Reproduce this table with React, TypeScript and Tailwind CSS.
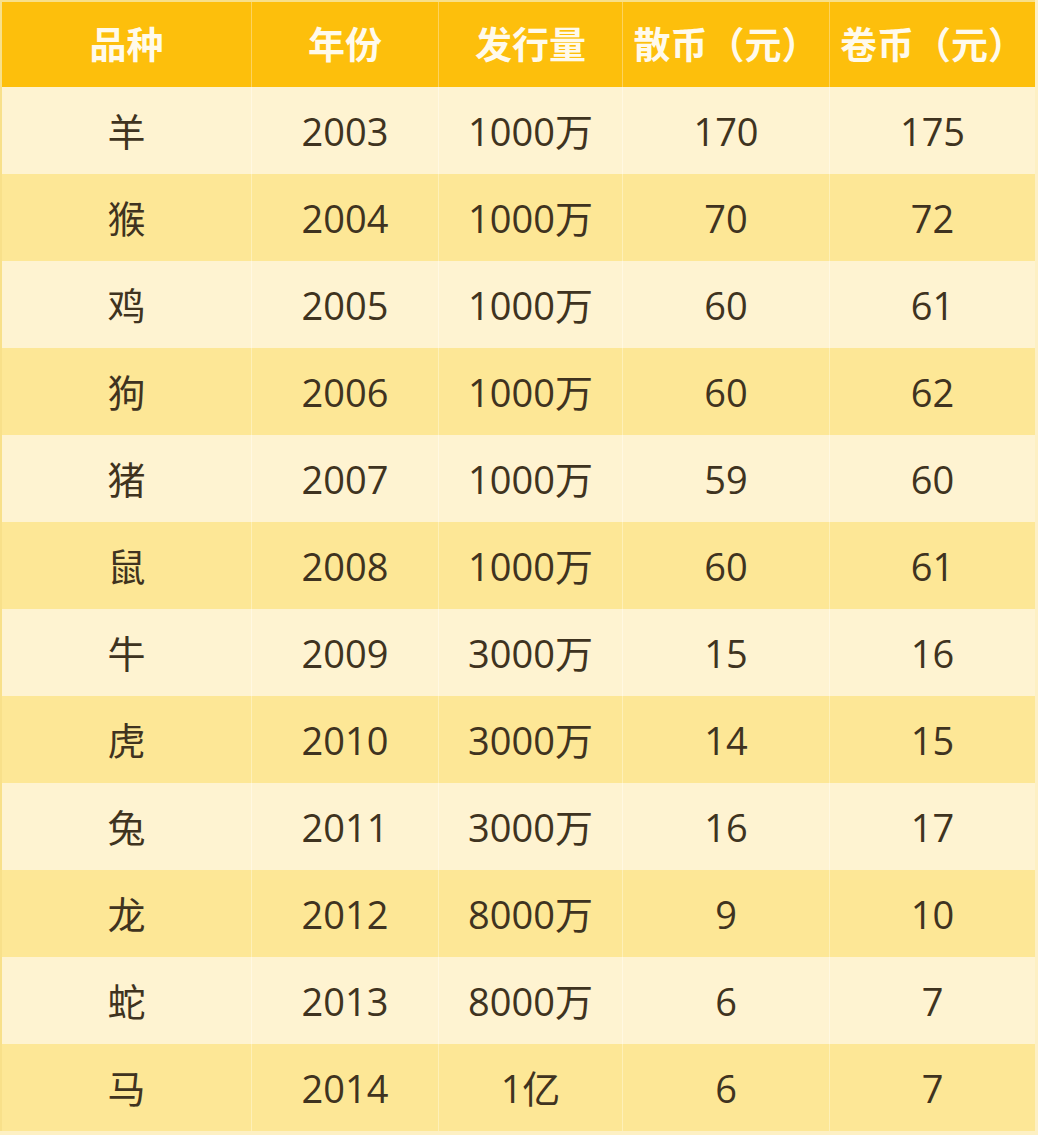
import React from "react";

const rows: [string, string, string, string, string][] = [
  ["羊", "2003", "1000万", "170", "175"],
  ["猴", "2004", "1000万", "70", "72"],
  ["鸡", "2005", "1000万", "60", "61"],
  ["狗", "2006", "1000万", "60", "62"],
  ["猪", "2007", "1000万", "59", "60"],
  ["鼠", "2008", "1000万", "60", "61"],
  ["牛", "2009", "3000万", "15", "16"],
  ["虎", "2010", "3000万", "14", "15"],
  ["兔", "2011", "3000万", "16", "17"],
  ["龙", "2012", "8000万", "9", "10"],
  ["蛇", "2013", "8000万", "6", "7"],
  ["马", "2014", "1亿", "6", "7"],
];

const headers = ["品种", "年份", "发行量", "散币（元）", "卷币（元）"];

export default function App() {
  return (
    <div
      className="w-[1038px] h-[1135px] bg-[#fdf0c4] overflow-hidden"
      style={{ fontFamily: '"Open Sans", "Noto Sans CJK SC", sans-serif' }}
    >
      <div className="w-[1035px] border-t-2 border-l-2 border-[#f8e08a]">
        <div className="grid grid-cols-[249px_187px_184px_207px_206px] h-[85px] bg-[#fdbf0c]">
          {headers.map((h, i) => (
            <div
              key={i}
              className={`flex items-center justify-center pb-[3px] text-[#fffaeb] font-bold text-[37px] leading-none ${i > 0 ? "border-l border-[#fdd35e]" : ""}`}
              style={{ fontFamily: '"Noto Sans CJK SC", sans-serif' }}
            >
              {h}
            </div>
          ))}
        </div>
        {rows.map((r, ri) => (
          <div
            key={ri}
            className={`grid grid-cols-[249px_187px_184px_207px_206px] h-[87px] ${ri % 2 === 0 ? "bg-[#fef3d1]" : "bg-[#fde796]"}`}
          >
            {r.map((c, ci) => (
              <div
                key={ci}
                className={`flex items-center justify-center text-[38px] leading-none text-[#3f3320] ${ci > 0 ? (ri % 2 === 0 ? "border-l border-[#fff8e2]" : "border-l border-[#fef0b8]") : ""}`}
              >
                {c}
              </div>
            ))}
          </div>
        ))}
      </div>
    </div>
  );
}
